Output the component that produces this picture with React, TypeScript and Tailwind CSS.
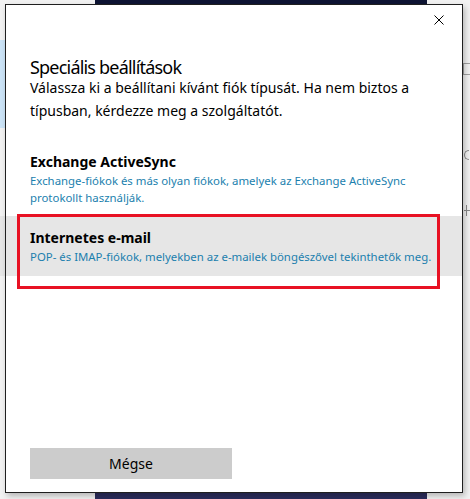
const font = { fontFamily: '"Segoe UI", "Noto Sans", "Open Sans", sans-serif' };

function Backdrop() {
  return (
    <>
      {/* wallpaper window peeking out behind the dialog */}
      <div className="absolute left-[95px] top-0 h-[5px] w-[332px] bg-[#0e1433]" />
      <div className="absolute bottom-0 left-[95px] h-[7px] w-[332px] bg-[#2b2c5c]" />
      {/* left app list behind */}
      <div className="absolute left-0 top-[40px] h-[88px] w-[6px] bg-[#cce4f7]" />
      <div className="absolute left-0 top-[216px] h-[60px] w-[6px] bg-[#e6e6e6]" />
      {/* right strip of the window behind */}
      <div className="absolute right-0 top-[63px] h-[12px] w-[7px] border-y border-l border-[#a0a0a0]" />
      <div className="absolute right-[1px] top-[150px] h-[10px] w-[5px] rounded-l-full border border-r-0 border-[#8a8a8a]" />
      <div className="absolute right-0 top-[210px] h-px w-[6px] bg-[#8a8a8a]" />
      <div className="absolute right-[3px] top-[205px] h-[11px] w-px bg-[#8a8a8a]" />
    </>
  );
}

function AccountOption({
  title,
  detail,
  selected,
}: {
  readonly title: string;
  readonly detail: string;
  readonly selected?: boolean;
}) {
  return (
    <div
      className={`px-6 pt-3 ${selected ? "bg-[#e6e6e6] pb-[11px]" : "pb-[10px]"}`}
    >
      <p className="text-[14px] font-bold leading-[20px] text-black">{title}</p>
      <p className="text-[11.4px] leading-[17px] text-[#1b7fae]">{detail}</p>
    </div>
  );
}

export default function App() {
  return (
    <div
      className="relative h-[499px] w-[470px] overflow-hidden bg-[#f2f2f2]"
      style={font}
    >
      <Backdrop />

      <div className="absolute left-[5px] top-[4px] flex h-[489px] w-[458px] flex-col border border-[#1f1f1f] bg-white shadow-[2px_3px_6px_rgba(0,0,0,0.25)]">
        <div className="flex justify-end pr-[18px] pt-[10px]">
          <svg width="10" height="10" viewBox="0 0 10 10" className="block">
            <path d="M0.5 0.5 L9.5 9.5 M9.5 0.5 L0.5 9.5" stroke="#000" strokeWidth="1" />
          </svg>
        </div>

        <div className="px-6 pt-[34px]">
          <h1 className="text-[18px] leading-[17px] tracking-[-0.8px] text-black">
            Speciális beállítások
          </h1>
          <p className="text-[14px] leading-[23px] text-black">
            Válassza ki a beállítani kívánt fiók típusát. Ha nem biztos a
            típusban, kérdezze meg a szolgáltatót.
          </p>
        </div>

        <div className="mt-[18px] flex flex-col">
          <AccountOption
            title="Exchange ActiveSync"
            detail="Exchange-fiókok és más olyan fiókok, amelyek az Exchange ActiveSync protokollt használják."
          />
          <div className="relative">
            <AccountOption
              selected
              title="Internetes e-mail"
              detail="POP- és IMAP-fiókok, melyekben az e-mailek böngészővel tekinthetők meg."
            />
            <div className="pointer-events-none absolute left-[11px] top-[-2px] h-[75px] w-[423px] border-[3px] border-[#e81123]" />
          </div>
        </div>

        <div className="mt-auto px-6 pb-[13px]">
          <button
            type="button"
            className="h-[31px] w-[202px] bg-[#cccccc] text-[14px] text-black"
          >
            Mégse
          </button>
        </div>
      </div>
    </div>
  );
}
